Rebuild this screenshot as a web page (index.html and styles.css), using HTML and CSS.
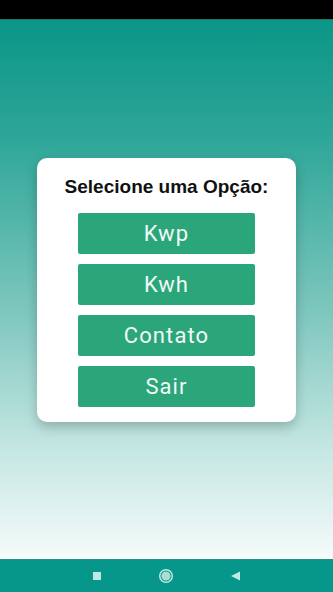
FILE: index.html
```html
<!DOCTYPE html>
<html lang="pt">
<head>
<meta charset="utf-8">
<title>Menu</title>
<link rel="stylesheet" href="styles.css">
</head>
<body>
<div class="screen">
  <div class="status-bar"></div>
  <main class="content">
    <section class="card">
      <h1 class="card-title">Selecione uma Opção:</h1>
      <div class="options">
        <button class="option">Kwp</button>
        <button class="option">Kwh</button>
        <button class="option">Contato</button>
        <button class="option">Sair</button>
      </div>
    </section>
  </main>
  <nav class="nav-bar">
    <svg class="nav-icon" width="12" height="12" viewBox="0 0 12 12"><rect x="2" y="2" width="8" height="8" fill="#bfe9e2"/></svg>
    <svg class="nav-icon" width="16" height="16" viewBox="0 0 16 16"><circle cx="8" cy="8" r="6.3" fill="none" stroke="#bfe9e2" stroke-width="1.5"/><circle cx="8" cy="8" r="4.6" fill="#a9ddd5"/></svg>
    <svg class="nav-icon" width="14" height="14" viewBox="0 0 14 14"><polygon points="2,7 11,2.5 11,11.5" fill="#bfe9e2"/></svg>
  </nav>
</div>
</body>
</html>
```
FILE: styles.css
```css
html, body {
  margin: 0;
  padding: 0;
}
body {
  width: 333px;
  height: 592px;
  overflow: hidden;
  font-family: Roboto, "Liberation Sans", sans-serif;
}
.screen {
  display: flex;
  flex-direction: column;
  height: 592px;
}
.status-bar {
  height: 20px;
  background: #000;
  border-bottom: 1px solid #2b6f69;
  box-sizing: border-box;
}
.content {
  flex: 1;
  display: flex;
  align-items: center;
  justify-content: center;
  background: linear-gradient(180deg, #0a9687 0%, #2ea698 22%, #80c8bf 55%, #c6e7e3 80%, #f5fbfb 100%);
}
.card {
  width: 259px;
  box-sizing: border-box;
  padding: 18px 41px 15px;
  background: #fff;
  border-radius: 10px;
  box-shadow: 0 5px 12px rgba(0, 0, 0, 0.22);
}
.card-title {
  margin: 0 -30px 15px;
  font-family: "Liberation Sans", Arial, sans-serif;
  font-weight: bold;
  font-size: 19px;
  line-height: 22px;
  color: #111;
  text-align: center;
}
.options {
  display: flex;
  flex-direction: column;
  gap: 10px;
}
.option {
  height: 41px;
  border: none;
  border-radius: 2px;
  background: #2ba67a;
  color: #f1faf6;
  font-family: Roboto, sans-serif;
  font-size: 22px;
  letter-spacing: 0.05em;
  padding: 0;
}
.nav-bar {
  height: 33px;
  background: #07968a;
  border-top: 1px solid #2c8c82;
  box-sizing: border-box;
  display: flex;
  align-items: center;
  justify-content: center;
  gap: 55px;
}
.nav-icon {
  display: block;
}
```
